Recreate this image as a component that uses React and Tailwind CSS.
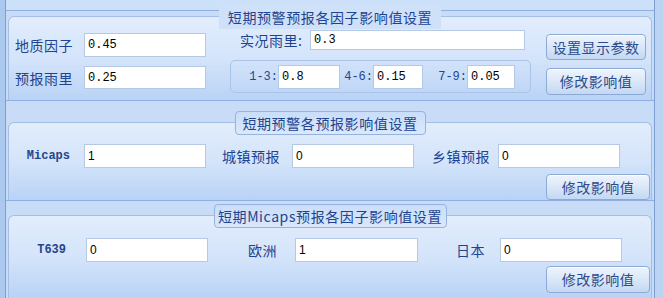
// Short-term warning factor settings panel
const cjk = { fontFamily: '"Noto Sans CJK SC", "Noto Sans", sans-serif' };
const mono = { fontFamily: '"Liberation Mono", "DejaVu Sans Mono", monospace' };

const TextBox = ({ value, className = "", monoText = true }) => (
  <div
    className={`flex items-center bg-white border border-[#b5c9e4] pl-[3px] text-[12px] text-black ${className}`}
    style={monoText ? mono : { fontFamily: '"Liberation Sans", Arial, sans-serif' }}
  >
    {value}
  </div>
);

const Button = ({ children, className = "" }) => (
  <div
    className={`flex items-center justify-center rounded-[4px] border border-[#8caad3] bg-gradient-to-b from-[#eef4fd] via-[#dbe7f8] to-[#c3d8f3] text-[14px] text-[#2a4b8d] tracking-[0.5px] shadow-[inset_0_1px_0_#ffffff] ${className}`}
    style={cjk}
  >
    {children}
  </div>
);

const Label = ({ children, className = "" }) => (
  <div className={`text-[14px] text-[#1e4490] tracking-[0.5px] leading-none ${className}`} style={cjk}>
    {children}
  </div>
);

const MonoLabel = ({ children, className = "" }) => (
  <div className={`text-[12px] font-bold text-[#24468c] leading-none ${className}`} style={mono}>
    {children}
  </div>
);

const GroupBox = ({ title, boxed, titleWidth, className = "", children }) => (
  <div
    className={`relative mx-[2px] border border-b-0 border-[#a3bfe4] rounded-t-[6px] bg-gradient-to-b from-[#e2edfc] via-[#d4e4fa] to-[#b9d3f6] ${className}`}
  >
    <div className="absolute left-0 right-0 top-0 flex justify-center -translate-y-1/2">
      <div
        className={`flex items-center justify-center h-[24px] text-[14px] text-[#1e4490] tracking-[0.6px] ${
          boxed
            ? "rounded-[4px] border border-[#94b3dd] bg-gradient-to-b from-[#c9ddf9] to-[#dbe8fb]"
            : "bg-[#cfe0f9]"
        } ${titleWidth}`}
        style={cjk}
      >
        {title}
      </div>
    </div>
    {children}
  </div>
);

export default function App() {
  return (
    <div className="w-[663px] h-[298px] overflow-hidden flex bg-[#c8dcf8]">
      <div className="w-[6px] bg-[#abc8ee] border-r border-[#7d9fd0]" />
      <div className="flex-1 flex flex-col">
        {/* Section 1 */}
        <div className="h-[100px] flex flex-col">
          <div className="h-[11px] bg-[#cde0f9] border-b border-[#8fb0de]" />
          <div className="h-[5px]" />
          <GroupBox title="短期预警预报各因子影响值设置" titleWidth="w-[222px]" className="h-[84px]">
            <div className="flex pl-[6px]">
              <div className="flex flex-col">
                <div className="flex items-center mt-[16px] h-[24px]">
                  <Label className="w-[69px]">地质因子</Label>
                  <TextBox value="0.45" className="w-[122px] h-[24px]" />
                </div>
                <div className="flex items-center mt-[9px] h-[23px]">
                  <Label className="w-[69px]">预报雨里</Label>
                  <TextBox value="0.25" className="w-[122px] h-[23px]" />
                </div>
              </div>
              <div className="flex flex-col ml-[24px]">
                <div className="flex items-center mt-[13px] h-[20px] pl-[10px]">
                  <Label className="w-[70px]">实况雨里:</Label>
                  <TextBox value="0.3" className="w-[215px] h-[20px]" />
                </div>
                <div className="flex items-center mt-[10px] w-[301px] h-[33px] rounded-[5px] border border-[#a9c4e8]">
                  <MonoLabel className="w-[47px] text-right font-normal text-[#3c62aa]">1-3:</MonoLabel>
                  <TextBox value="0.8" className="w-[62px] h-[24px]" />
                  <MonoLabel className="w-[33px] text-right font-normal text-[#3c62aa]">4-6:</MonoLabel>
                  <TextBox value="0.15" className="w-[50px] h-[24px]" />
                  <MonoLabel className="w-[44px] text-right font-normal text-[#3c62aa]">7-9:</MonoLabel>
                  <TextBox value="0.05" className="w-[48px] h-[24px]" />
                </div>
              </div>
              <div className="flex flex-col ml-[15px]">
                <Button className="mt-[17px] w-[100px] h-[26px]">设置显示参数</Button>
                <Button className="mt-[8px] w-[100px] h-[27px]">修改影响值</Button>
              </div>
            </div>
          </GroupBox>
        </div>

        {/* Section 2 */}
        <div className="h-[100px] flex flex-col border-t border-[#8fb0de]">
          <div className="h-[21px]" />
          <GroupBox title="短期预警各预报影响值设置" boxed titleWidth="w-[191px]" className="h-[78px]">
            <div className="flex items-center mt-[21px] h-[24px]">
              <div className="w-[75px] flex justify-end pr-[14px]">
                <MonoLabel>Micaps</MonoLabel>
              </div>
              <TextBox value="1" monoText={false} className="w-[122px] h-[24px]" />
              <div className="w-[86px] flex justify-end pr-[12px]">
                <Label>城镇预报</Label>
              </div>
              <TextBox value="0" monoText={false} className="w-[122px] h-[24px]" />
              <div className="w-[84px] flex justify-end pr-[8px]">
                <Label>乡镇预报</Label>
              </div>
              <TextBox value="0" monoText={false} className="w-[122px] h-[24px]" />
            </div>
            <div className="flex justify-end mt-[6px] pr-[1px]">
              <Button className="w-[104px] h-[26px]">修改影响值</Button>
            </div>
          </GroupBox>
        </div>

        {/* Section 3 */}
        <div className="flex-1 flex flex-col border-t border-[#8fb0de]">
          <div className="h-[14px]" />
          <GroupBox title="短期Micaps预报各因子影响值设置" boxed titleWidth="w-[233px]" className="flex-1">
            <div className="flex items-center mt-[22px] h-[24px]">
              <div className="w-[77px] flex justify-end pr-[20px]">
                <MonoLabel>T639</MonoLabel>
              </div>
              <TextBox value="0" monoText={false} className="w-[122px] h-[24px]" />
              <div className="w-[87px] flex justify-end pr-[18px]">
                <Label>欧洲</Label>
              </div>
              <TextBox value="1" monoText={false} className="w-[123px] h-[24px]" />
              <div className="w-[82px] flex justify-end pr-[15px]">
                <Label>日本</Label>
              </div>
              <TextBox value="0" monoText={false} className="w-[122px] h-[24px]" />
            </div>
            <div className="flex justify-end mt-[4px] pr-[1px]">
              <Button className="w-[104px] h-[27px]">修改影响值</Button>
            </div>
          </GroupBox>
        </div>
      </div>
      <div className="w-[9px] bg-[#bcd4f4] border-l border-[#7d9fd0]" />
    </div>
  );
}
